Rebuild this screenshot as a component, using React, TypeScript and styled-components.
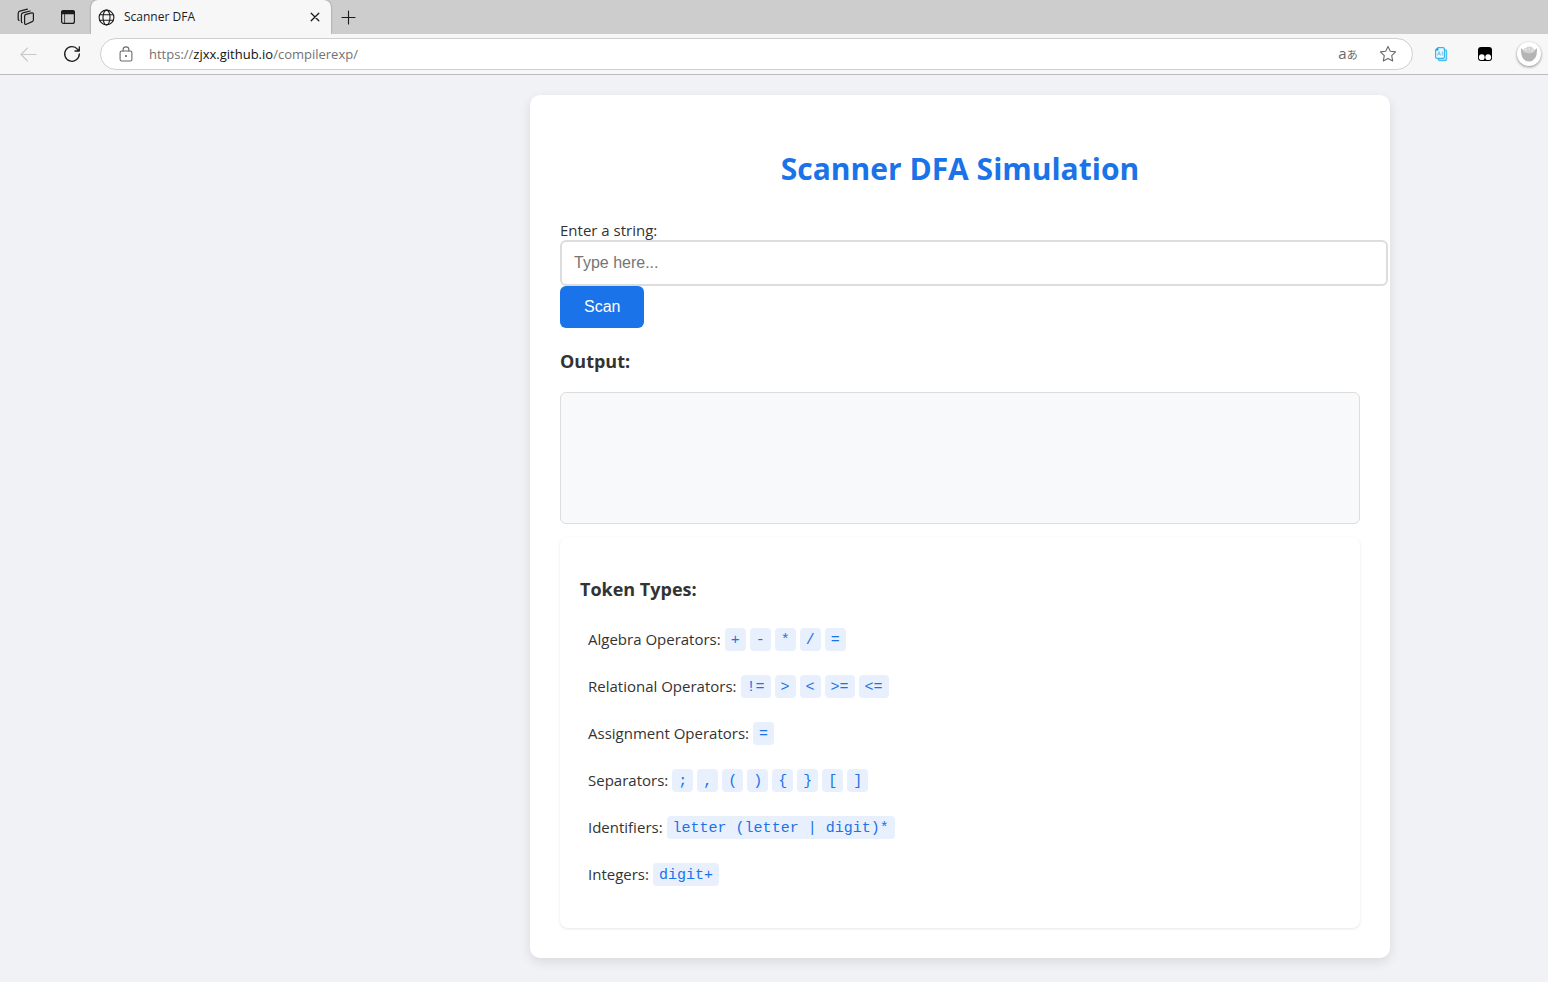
import React, { useState } from "react";
import styled, { createGlobalStyle } from "styled-components";

const UI_FONT = `"Segoe UI", "Open Sans", "Noto Sans", sans-serif`;
const CJK_FONT = `"Open Sans", "Noto Sans CJK JP", sans-serif`;
const CODE_FONT = `Consolas, "Liberation Mono", monospace`;
const FORM_FONT = `Arial, "Liberation Sans", sans-serif`;

const GlobalStyle = createGlobalStyle`
  * { box-sizing: border-box; }
  body {
    margin: 0;
    background: #f0f2f5;
    color: #333;
    font-family: ${UI_FONT};
    font-size: 15px;
  }
`;

const Page = styled.div`
  display: flex;
  flex-direction: column;
  min-height: 100vh;
`;

const TabStrip = styled.div`
  display: flex;
  align-items: center;
  height: 34px;
  background: #cdcdcd;
`;

const StripTools = styled.div`
  display: flex;
  align-items: center;
  gap: 18px;
  width: 91px;
  padding-left: 14px;
`;

const IconButton = styled.button<{ $muted?: boolean }>`
  display: flex;
  align-items: center;
  justify-content: center;
  width: 24px;
  height: 24px;
  padding: 0;
  border: 0;
  background: none;
  color: ${({ $muted }) => ($muted ? "#6a6a6a" : "#1b1b1b")};

  &:disabled { color: #c8c8c8; }
`;

const Tab = styled.div`
  display: flex;
  align-items: center;
  align-self: stretch;
  gap: 9px;
  width: 240px;
  padding: 0 4px 0 7px;
  border-radius: 7px 7px 0 0;
  background: #f7f7f7;
  box-shadow: 0 0 2px rgba(0, 0, 0, 0.4);
  clip-path: inset(0 -4px 0 -4px);
  color: #1b1b1b;
`;

const TabTitle = styled.span`
  flex: 1;
  font-size: 12px;
  line-height: 16px;
`;

const NewTab = styled(IconButton)`
  margin-left: 5px;
`;

const Toolbar = styled.div`
  display: flex;
  align-items: center;
  height: 41px;
  padding: 0 7px 0 16px;
  border-bottom: 1px solid #bdbdbd;
  background: #f7f7f7;
`;

const NavButtons = styled.div`
  display: flex;
  gap: 20px;
  width: 84px;
`;

const AddressBar = styled.div`
  display: flex;
  flex: 1;
  align-items: center;
  height: 32px;
  padding: 0 12px 0 13px;
  border: 1px solid #cfcfcf;
  border-radius: 16px;
  background: #fff;
`;

const Url = styled.a`
  flex: 1;
  margin-left: 11px;
  color: #737373;
  font-size: 13px;
  line-height: 20px;
  text-decoration: none;
`;

const Host = styled.span`
  color: #111;
`;

const AddressTools = styled.div`
  display: flex;
  gap: 16px;
`;

const TranslateButton = styled(IconButton)`
  align-items: baseline;
  font-family: ${CJK_FONT};
  font-size: 15px;
  line-height: 22px;
`;

const Kana = styled.span`
  font-size: 11px;
`;

const Extensions = styled.div`
  display: flex;
  align-items: center;
  gap: 20px;
  margin-left: 16px;
`;

const Avatar = styled.button`
  display: flex;
  align-items: center;
  justify-content: center;
  width: 24px;
  height: 24px;
  padding: 0;
  border: 0;
  border-radius: 50%;
  background: #fff;
  box-shadow: 0 1px 3px rgba(0, 0, 0, 0.45);
`;

const Content = styled.main`
  display: flex;
  justify-content: flex-end;
  padding: 20px 158px 24px 20px;
`;

const Card = styled.section`
  width: 100%;
  max-width: 860px;
  padding: 30px;
  border-radius: 10px;
  background: #fff;
  box-shadow: 0 4px 12px rgba(0, 0, 0, 0.1);
`;

const Title = styled.h1`
  margin: 22px 0 29px;
  color: #1a73e8;
  font-size: 30px;
  line-height: 44px;
  text-align: center;
`;

const Label = styled.label`
  display: block;
  line-height: 20px;
`;

const TextInput = styled.input`
  display: block;
  box-sizing: content-box;
  width: 100%;
  height: 18px;
  padding: 12px;
  border: 2px solid #ddd;
  border-radius: 6px;
  font-family: ${FORM_FONT};
  font-size: 16px;

  &::placeholder { color: #757575; }
`;

const ScanButton = styled.button`
  display: block;
  padding: 12px 24px;
  border: 0;
  border-radius: 6px;
  background: #1a73e8;
  color: #fff;
  font-family: ${FORM_FONT};
  font-size: 16px;
  line-height: 18px;
`;

const Heading = styled.h3`
  margin: 20px 0 18px;
  font-size: 18px;
  line-height: 26px;
`;

const Output = styled.div`
  min-height: 132px;
  padding: 15px;
  border: 1px solid #ddd;
  border-radius: 6px;
  background: #f8f9fa;
`;

const TokenPanel = styled.section`
  margin-top: 13px;
  padding: 19px 20px 30px;
  border-radius: 8px;
  background: #fff;
  box-shadow: 0 1px 3px rgba(0, 0, 0, 0.1);
`;

const TokenHeading = styled(Heading)`
  margin-bottom: 14px;
`;

const TokenList = styled.ul`
  margin: 0;
  padding: 0;
  list-style: none;
`;

const TokenRow = styled.li`
  display: flex;
  align-items: center;
  gap: 4px;
  min-height: 47px;
  padding: 0 8px;
`;

const TokenName = styled.span`
  padding-bottom: 2px;
`;

const Token = styled.code`
  padding: 2px 6px 0;
  border-radius: 4px;
  background: #e8f0fe;
  color: #1a73e8;
  font-family: ${CODE_FONT};
  font-size: 15px;
  line-height: 21px;
`;

const tokenTypes = [
  { name: "Algebra Operators:", tokens: ["+", "-", "*", "/", "="] },
  { name: "Relational Operators:", tokens: ["!=", ">", "<", ">=", "<="] },
  { name: "Assignment Operators:", tokens: ["="] },
  { name: "Separators:", tokens: [";", ",", "(", ")", "{", "}", "[", "]"] },
  { name: "Identifiers:", tokens: ["letter (letter | digit)*"] },
  { name: "Integers:", tokens: ["digit+"] },
];

const stroke = { fill: "none", stroke: "currentColor", strokeLinecap: "round", strokeLinejoin: "round" } as const;

const WorkspacesIcon = () => (
  <svg width="18" height="18" viewBox="0 0 18 18" {...stroke} strokeWidth="1.2">
    <path d="M9 6.4 14.8 4.9Q16.4 4.6 16.4 6.2V12Q16.4 13.2 15.2 13.6L9.4 16.2Q7.6 16.8 7.6 15V8.2Q7.6 6.8 9 6.4Z" />
    <path d="M5 14.6Q4.4 14.2 4.4 13.2V7Q4.4 5.2 5.8 4.8L13.2 3" />
    <path d="M2 12.4Q1.2 12 1.2 11V5.4Q1.2 3.6 2.8 3.2L10.4 1.2" />
  </svg>
);

const TabActionsIcon = () => (
  <svg width="16" height="16" viewBox="0 0 16 16" {...stroke} strokeWidth="1.2">
    <rect x="1.6" y="1.6" width="12.8" height="12.8" rx="2" />
    <path d="M1.6 4.6V3.6Q1.6 1.6 3.6 1.6H12.4Q14.4 1.6 14.4 3.6V4.6Z" fill="currentColor" />
    <path d="M4.6 5V14.4" strokeWidth="0.8" />
  </svg>
);

const GlobeIcon = () => (
  <svg width="17" height="17" viewBox="0 0 17 17" {...stroke} strokeWidth="1.1">
    <circle cx="8.5" cy="8.5" r="7.4" />
    <ellipse cx="8.5" cy="8.5" rx="3.5" ry="7.4" />
    <path d="M1.8 5.8H15.2M1.8 11.2H15.2" />
  </svg>
);

const CloseIcon = () => (
  <svg width="10" height="10" viewBox="0 0 10 10" {...stroke} strokeWidth="1.3">
    <path d="M1.2 1.2 8.8 8.8M8.8 1.2 1.2 8.8" />
  </svg>
);

const PlusIcon = () => (
  <svg width="15" height="15" viewBox="0 0 15 15" {...stroke} strokeWidth="1.1">
    <path d="M7.5 1V14M1 7.5H14" />
  </svg>
);

const BackIcon = () => (
  <svg width="17" height="15" viewBox="0 0 17 15" {...stroke} strokeWidth="1.1">
    <path d="M16 7.5H1M7.5 1 1 7.5 7.5 14" />
  </svg>
);

const ReloadIcon = () => (
  <svg width="18" height="18" viewBox="0 0 18 18" {...stroke} strokeWidth="1.3">
    <path d="M16.3 9A7.3 7.3 0 1 1 14.6 4.3L16 5.8M16.3 1.8V6H12" />
  </svg>
);

const LockIcon = () => (
  <svg width="14" height="16" viewBox="0 0 14 16" {...stroke} strokeWidth="1.1">
    <rect x="1.1" y="5" width="11.8" height="10" rx="1.6" />
    <path d="M4.1 5V3.8A2.9 2.9 0 0 1 9.9 3.8V5" />
    <circle cx="7" cy="10" r="0.5" fill="currentColor" />
  </svg>
);

const StarIcon = () => (
  <svg width="18" height="18" viewBox="0 0 18 18" {...stroke} strokeWidth="1.1">
    <path d="M9 1.4 11.3 6.2 16.6 6.9 12.7 10.6 13.7 15.9 9 13.4 4.3 15.9 5.3 10.6 1.4 6.9 6.7 6.2Z" />
  </svg>
);

const AiPagesIcon = () => (
  <svg width="14" height="16" viewBox="0 0 14 16" fill="none" strokeLinejoin="round">
    <path d="M4.5 12.5V13.5Q4.5 14.4 5.5 14.4H11Q12.4 14.4 12.4 13V5Q12.4 4 11.4 4H10.4" stroke="#4fc0ee" strokeWidth="1.6" />
    <path d="M4 1.6H9Q10.4 1.6 10.4 3V11Q10.4 12.4 9 12.4H3Q1.6 12.4 1.6 11V4Z" fill="#eaf8ff" stroke="#35b6ef" strokeWidth="1.2" />
    <path d="M1.4 4.4 4.4 1.4V4.4Z" fill="#1592d8" />
    <path d="M3.4 9.4 5 5.6 6.6 9.4M4 8.2H6M8.3 5.6V9.4" stroke="#6fb9df" strokeWidth="0.9" />
  </svg>
);

const MaskIcon = () => (
  <svg width="14" height="14" viewBox="0 0 14 14">
    <rect width="14" height="14" rx="3" fill="#000" />
    <circle cx="3.8" cy="10.2" r="2.9" fill="#fff" />
    <circle cx="10.2" cy="10.2" r="2.9" fill="#fff" />
  </svg>
);

const AvatarIcon = () => (
  <svg width="18" height="18" viewBox="0 0 18 18">
    <path d="M1 3.2 3.8 5.6H14.2L17 3.2Q17.6 16.4 9 16.4T1 3.2Z" fill="#b4b4b4" />
    <path d="M3.4 7Q3.2 3 6 3Q7.2 .8 9.6 1.8Q12 1 13 3.4Q15 4.4 14.4 7L9.6 8.4Z" fill="#d2d2d2" />
    <path d="M5 5.6 7 4.2M8.6 3.4 9.8 5M11.2 6.2 13 5" stroke="#f2f2f2" strokeWidth="1" />
  </svg>
);

export default function App() {
  const [text, setText] = useState("");

  return (
    <Page>
      <GlobalStyle />
      <header>
        <TabStrip>
          <StripTools>
            <IconButton aria-label="Workspaces"><WorkspacesIcon /></IconButton>
            <IconButton aria-label="Tab actions"><TabActionsIcon /></IconButton>
          </StripTools>
          <Tab>
            <GlobeIcon />
            <TabTitle>Scanner DFA</TabTitle>
            <IconButton aria-label="Close tab"><CloseIcon /></IconButton>
          </Tab>
          <NewTab aria-label="New tab"><PlusIcon /></NewTab>
        </TabStrip>
        <Toolbar>
          <NavButtons>
            <IconButton aria-label="Back" disabled><BackIcon /></IconButton>
            <IconButton aria-label="Reload"><ReloadIcon /></IconButton>
          </NavButtons>
          <AddressBar>
            <IconButton $muted aria-label="Site information"><LockIcon /></IconButton>
            <Url href="https://zjxx.github.io/compilerexp/">
              https://<Host>zjxx.github.io</Host>/compilerexp/
            </Url>
            <AddressTools>
              <TranslateButton $muted aria-label="Translate">a<Kana>あ</Kana></TranslateButton>
              <IconButton $muted aria-label="Add to favorites"><StarIcon /></IconButton>
            </AddressTools>
          </AddressBar>
          <Extensions>
            <IconButton aria-label="AI pages"><AiPagesIcon /></IconButton>
            <IconButton aria-label="Script manager"><MaskIcon /></IconButton>
            <Avatar aria-label="Profile"><AvatarIcon /></Avatar>
          </Extensions>
        </Toolbar>
      </header>
      <Content>
        <Card>
          <Title>Scanner DFA Simulation</Title>
          <Label htmlFor="source">Enter a string:</Label>
          <TextInput
            id="source"
            type="text"
            placeholder="Type here..."
            value={text}
            onChange={(event) => setText(event.target.value)}
          />
          <ScanButton type="button">Scan</ScanButton>
          <Heading>Output:</Heading>
          <Output />
          <TokenPanel>
            <TokenHeading>Token Types:</TokenHeading>
            <TokenList>
              {tokenTypes.map(({ name, tokens }) => (
                <TokenRow key={name}>
                  <TokenName>{name}</TokenName>
                  {tokens.map((token) => <Token key={token}>{token}</Token>)}
                </TokenRow>
              ))}
            </TokenList>
          </TokenPanel>
        </Card>
      </Content>
    </Page>
  );
}
